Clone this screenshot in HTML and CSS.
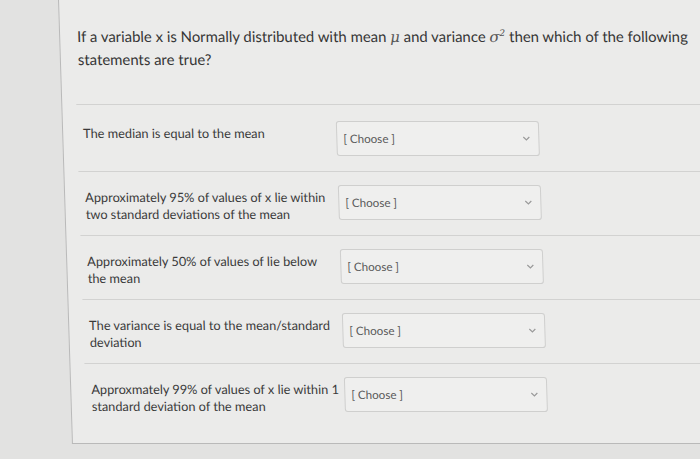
FILE: index.html
```html
<!DOCTYPE html>
<html lang="en">
<head>
<meta charset="utf-8">
<title>Quiz question</title>
<link rel="stylesheet" href="styles.css">
</head>
<body>
<div class="page">
  <div class="panel">
    <p class="question">If a variable x is Normally distributed with mean <i class="math">μ</i> and variance <i class="math">σ<sup>2</sup></i> then which of the following statements are true?</p>
    <div class="answers">
      <div class="row">
        <div class="label">The median is equal to the mean</div>
        <div class="select"><span>[ Choose ]</span><svg class="chev" viewBox="0 0 8 5" width="8" height="5"><path d="M1 1 L4 4 L7 1" /></svg></div>
      </div>
      <div class="row">
        <div class="label">Approximately 95% of values of x lie within two standard deviations of the mean</div>
        <div class="select"><span>[ Choose ]</span><svg class="chev" viewBox="0 0 8 5" width="8" height="5"><path d="M1 1 L4 4 L7 1" /></svg></div>
      </div>
      <div class="row">
        <div class="label">Approximately 50% of values of lie below the mean</div>
        <div class="select"><span>[ Choose ]</span><svg class="chev" viewBox="0 0 8 5" width="8" height="5"><path d="M1 1 L4 4 L7 1" /></svg></div>
      </div>
      <div class="row">
        <div class="label">The variance is equal to the mean/standard deviation</div>
        <div class="select"><span>[ Choose ]</span><svg class="chev" viewBox="0 0 8 5" width="8" height="5"><path d="M1 1 L4 4 L7 1" /></svg></div>
      </div>
      <div class="row">
        <div class="label">Approxmately 99% of values of x lie within 1 standard deviation of the mean</div>
        <div class="select"><span>[ Choose ]</span><svg class="chev" viewBox="0 0 8 5" width="8" height="5"><path d="M1 1 L4 4 L7 1" /></svg></div>
      </div>
    </div>
  </div>
</div>
</body>
</html>
```
FILE: styles.css
```css
html, body {
  margin: 0;
  padding: 0;
}
body {
  width: 700px;
  height: 459px;
  overflow: hidden;
  background: #e2e2e1;
  font-family: Lato, "Open Sans", "Liberation Sans", sans-serif;
  color: #333;
}
.page {
  padding-left: 58px;
}
.panel {
  width: 720px;
  background: #ebebea;
  border-left: 1px solid #b9b9b9;
  border-bottom: 1px solid #b9b9b9;
  padding: 25px 0 16px 17px;
  transform: skewX(1.8deg);
  transform-origin: 0 0;
}
.question {
  margin: 0;
  font-size: 14.9px;
  line-height: 22px;
  color: #363636;
  width: 640px;
}
.math {
  font-family: "DejaVu Serif", "Liberation Serif", serif;
  font-style: italic;
  color: #555;
}
.math sup {
  font-size: 9px;
  line-height: 0;
}
.answers {
  margin-top: 34px;
  margin-left: -3px;
}
.row {
  display: flex;
  align-items: flex-start;
  border-top: 1px solid #d2d2d1;
  padding: 13px 0 12px 6px;
}
.row:first-child {
  padding-top: 16px;
  padding-bottom: 15px;
}
.label {
  width: 248px;
  margin-right: 5px;
  padding-top: 4px;
  font-size: 12.75px;
  line-height: 17px;
  color: #3a3a3a;
}
.select {
  box-sizing: border-box;
  width: 203px;
  height: 35px;
  border: 1px solid #cfcfce;
  border-radius: 3px;
  background: #efefee;
  display: flex;
  align-items: center;
  justify-content: space-between;
  padding: 0 8px 0 6px;
  font-size: 11.6px;
  color: #5a5a5a;
}
.chev path {
  fill: none;
  stroke: #9a9a9a;
  stroke-width: 1.2;
}
```
